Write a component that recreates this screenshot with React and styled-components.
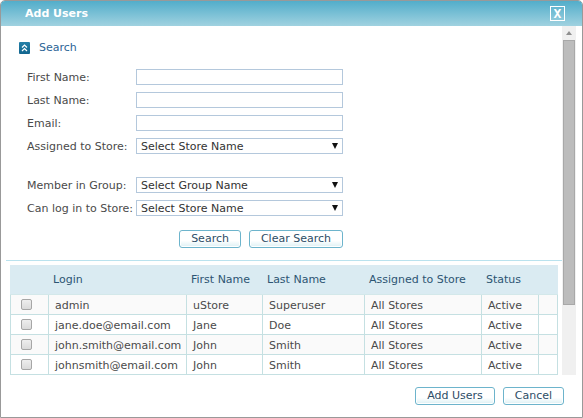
import React, { useState } from 'react'
import styled, { createGlobalStyle } from 'styled-components'

const users = [
    { login: 'admin', first: 'uStore', last: 'Superuser' },
    { login: 'jane.doe@email.com', first: 'Jane', last: 'Doe' },
    { login: 'john.smith@email.com', first: 'John', last: 'Smith' },
    { login: 'johnsmith@email.com', first: 'John', last: 'Smith' },
]

const App = () => {
    const [selected, setSelected] = useState([])

    const toggle = (login) => {
        setSelected(
            selected.includes(login)
                ? selected.filter((item) => item !== login)
                : [...selected, login]
        )
    }

    return (
        <>
            <GlobalStyle />
            <Dialog role="dialog" aria-labelledby="dialog-title">
                <TitleBar>
                    <Title id="dialog-title">Add Users</Title>
                    <CloseButton type="button" aria-label="Close">
                        X
                    </CloseButton>
                </TitleBar>

                <Body>
                    <Content>
                        <SearchPanel onSubmit={(e) => e.preventDefault()}>
                            <SearchHeading>
                                <CollapseIcon />
                                <h2>Search</h2>
                            </SearchHeading>

                            <Fields>
                                <TextField id="first" label="First Name:" />
                                <TextField id="last" label="Last Name:" />
                                <TextField id="email" label="Email:" />
                                <SelectField
                                    id="assigned"
                                    label="Assigned to Store:"
                                    placeholder="Select Store Name"
                                />
                                <FieldGap />
                                <SelectField
                                    id="group"
                                    label="Member in Group:"
                                    placeholder="Select Group Name"
                                />
                                <SelectField
                                    id="store"
                                    label="Can log in to Store:"
                                    placeholder="Select Store Name"
                                />
                                <SearchActions>
                                    <Button type="submit">Search</Button>
                                    <Button type="reset">Clear Search</Button>
                                </SearchActions>
                            </Fields>
                        </SearchPanel>

                        <Results>
                            <Table>
                                <colgroup>
                                    <Col $width={38} />
                                    <Col $width={138} />
                                    <Col $width={76} />
                                    <Col $width={102} />
                                    <Col $width={117} />
                                    <Col $width={57} />
                                    <Col $width={20} />
                                </colgroup>
                                <thead>
                                    <tr>
                                        <HeadCell />
                                        <HeadCell>Login</HeadCell>
                                        <HeadCell>First Name</HeadCell>
                                        <HeadCell>Last Name</HeadCell>
                                        <HeadCell>Assigned to Store</HeadCell>
                                        <HeadCell>Status</HeadCell>
                                        <HeadCell />
                                    </tr>
                                </thead>
                                <tbody>
                                    {users.map((user) => (
                                        <Row key={user.login}>
                                            <CheckCell>
                                                <Checkbox
                                                    type="checkbox"
                                                    aria-label={user.login}
                                                    checked={selected.includes(
                                                        user.login
                                                    )}
                                                    onChange={() =>
                                                        toggle(user.login)
                                                    }
                                                />
                                            </CheckCell>
                                            <Cell>{user.login}</Cell>
                                            <Cell>{user.first}</Cell>
                                            <Cell>{user.last}</Cell>
                                            <Cell>All Stores</Cell>
                                            <Cell>Active</Cell>
                                            <Cell />
                                        </Row>
                                    ))}
                                </tbody>
                            </Table>
                        </Results>
                    </Content>

                    <ScrollBar aria-hidden="true">
                        <ScrollArrow>
                            <svg width="6" height="4" viewBox="0 0 6 4">
                                <path d="M3 0l3 4H0z" fill="#8f8f8f" />
                            </svg>
                        </ScrollArrow>
                        <ScrollThumb />
                    </ScrollBar>
                </Body>

                <Footer>
                    <Button type="button">Add Users</Button>
                    <Button type="button">Cancel</Button>
                </Footer>
            </Dialog>
        </>
    )
}

const TextField = ({ id, label }) => (
    <>
        <Label htmlFor={id}>{label}</Label>
        <Input id={id} type="text" />
    </>
)

const SelectField = ({ id, label, placeholder }) => (
    <>
        <Label htmlFor={id}>{label}</Label>
        <SelectWrap>
            <Select id={id}>
                <option>{placeholder}</option>
            </Select>
            <Arrow width="6" height="6" viewBox="0 0 6 6">
                <path d="M0 0h6L3 6z" fill="#111" />
            </Arrow>
        </SelectWrap>
    </>
)

const CollapseIcon = () => (
    <svg width="12" height="12" viewBox="0 0 12 12">
        <defs>
            <linearGradient id="collapse" x1="0" y1="0" x2="0" y2="1">
                <stop offset="0" stopColor="#2580a8" />
                <stop offset="1" stopColor="#12658e" />
            </linearGradient>
        </defs>
        <rect width="11" height="12" rx="1" fill="url(#collapse)" />
        <path
            d="M3 5.500l2.500-2.500L8 5.500M3 9l2.500-2.500L8 9"
            fill="none"
            stroke="#fff"
            strokeWidth="1.200"
        />
    </svg>
)

const GlobalStyle = createGlobalStyle`
    * {
        box-sizing: border-box;
    }

    body {
        margin: 0;
        background: #fff;
        color: #4a4a4a;
        font-family: Verdana, 'DejaVu Sans', sans-serif;
        font-size: 11px;
        line-height: 14px;
    }

    button, input, select {
        margin: 0;
        color: inherit;
        font: inherit;
    }
`

const Dialog = styled.div`
    height: 100vh;
    display: flex;
    flex-direction: column;
    overflow: hidden;
    border: 1px solid #999;
    border-radius: 5px 5px 0 0;
`

// TITLE BAR
const TitleBar = styled.header`
    flex: none;
    height: 25px;
    padding: 0 17px 0 24px;
    display: flex;
    align-items: center;
    justify-content: space-between;
    background: linear-gradient(#52adca, #a0d2e0);
`

const Title = styled.h1`
    margin: 0;
    color: #fff;
    font-size: 11px;
    font-weight: bold;
`

const CloseButton = styled.button`
    width: 15px;
    height: 15px;
    padding: 0;
    border: 1px solid #fff;
    background: transparent;
    color: #fff;
    font-family: 'DejaVu Sans Mono', monospace;
    font-size: 13px;
    font-weight: bold;
    line-height: 13px;
    cursor: pointer;
`

// BODY
const Body = styled.main`
    flex: 1;
    min-height: 0;
    display: flex;
    padding: 0 6px 0 5px;
`

const Content = styled.div`
    flex: 1;
    min-width: 0;
    overflow: hidden;
`

const SearchPanel = styled.form`
    padding: 15px 13px 12px;
    border-bottom: 1px solid #b9e2ee;
`

const SearchHeading = styled.div`
    display: flex;
    align-items: center;
    gap: 8px;

    h2 {
        margin: 0;
        color: #2b6496;
        font-size: 11px;
        font-weight: normal;
    }
`

const Fields = styled.div`
    display: grid;
    grid-template-columns: 102px 207px;
    column-gap: 7px;
    row-gap: 7px;
    align-items: center;
    padding: 14px 0 0 8px;
`

const Label = styled.label`
    padding-top: 2px;
    white-space: nowrap;
`

const Input = styled.input`
    width: 100%;
    height: 16px;
    padding: 0 4px;
    border: 1px solid #b4c8dc;
    background: #fff;
`

const SelectWrap = styled.div`
    position: relative;
    display: flex;
`

const Select = styled.select`
    width: 100%;
    height: 16px;
    padding: 1px 16px 0 4px;
    appearance: none;
    border: 1px solid #b4c8dc;
    border-radius: 0;
    background: #fff;
    color: #333;
    line-height: 13px;
`

const Arrow = styled.svg`
    position: absolute;
    top: 5px;
    right: 5px;
    pointer-events: none;
`

const FieldGap = styled.div`
    grid-column: 1 / -1;
    height: 9px;
`

const SearchActions = styled.div`
    grid-column: 1 / -1;
    display: flex;
    justify-content: flex-end;
    gap: 8px;
    padding-top: 7px;
`

const Button = styled.button`
    height: 18px;
    padding: 0 11px;
    border: 1px solid #6db4cc;
    border-radius: 3px;
    background: linear-gradient(#fff 60%, #dcf0f4);
    box-shadow: inset 0 0 0 1px #fff;
    color: #2d4d66;
    line-height: 16px;
    cursor: pointer;
`

// RESULTS
const Results = styled.div`
    padding: 4px 4px 0;
`

const Table = styled.table`
    width: 100%;
    table-layout: fixed;
    border-collapse: separate;
    border-spacing: 0;
`

const Col = styled.col`
    width: ${(props) => props.$width}px;
`

const HeadCell = styled.th`
    height: 30px;
    padding: 1px 0 0 5px;
    border-bottom: 1px solid #d3e8ea;
    background: #daebf2;
    color: #2d5573;
    font-weight: normal;
    text-align: left;
    white-space: nowrap;
`

const Row = styled.tr`
    background: #fff;

    &:nth-child(odd) {
        background: #fafafa;
    }
`

const Cell = styled.td`
    height: 20px;
    padding: 2px 0 0 6px;
    border-bottom: 1px solid #c5e0e2;
    border-left: 1px solid #c5e0e2;
    white-space: nowrap;

    &:last-child {
        border-right: 1px solid #c5e0e2;
    }
`

const CheckCell = styled(Cell)`
    padding: 0 0 0 10px;
`

const Checkbox = styled.input`
    display: block;
    width: 11px;
    height: 11px;
    appearance: none;
    border: 1px solid #a6a6a6;
    border-radius: 2px;
    background: linear-gradient(#eee, #dadada);

    &:checked {
        background: #2d5573;
    }
`

// SCROLL BAR
const ScrollBar = styled.div`
    flex: none;
    width: 14px;
    display: flex;
    flex-direction: column;
    background: #f0f0f0;
`

const ScrollArrow = styled.div`
    height: 14px;
    display: flex;
    align-items: center;
    justify-content: center;
`

const ScrollThumb = styled.div`
    height: 76%;
    margin: 0 1px;
    border: 1px solid #a8a8a8;
    background: #bcbcbc;
`

// FOOTER
const Footer = styled.footer`
    flex: none;
    display: flex;
    justify-content: flex-end;
    gap: 8px;
    padding: 12px 18px;
`

export default App
